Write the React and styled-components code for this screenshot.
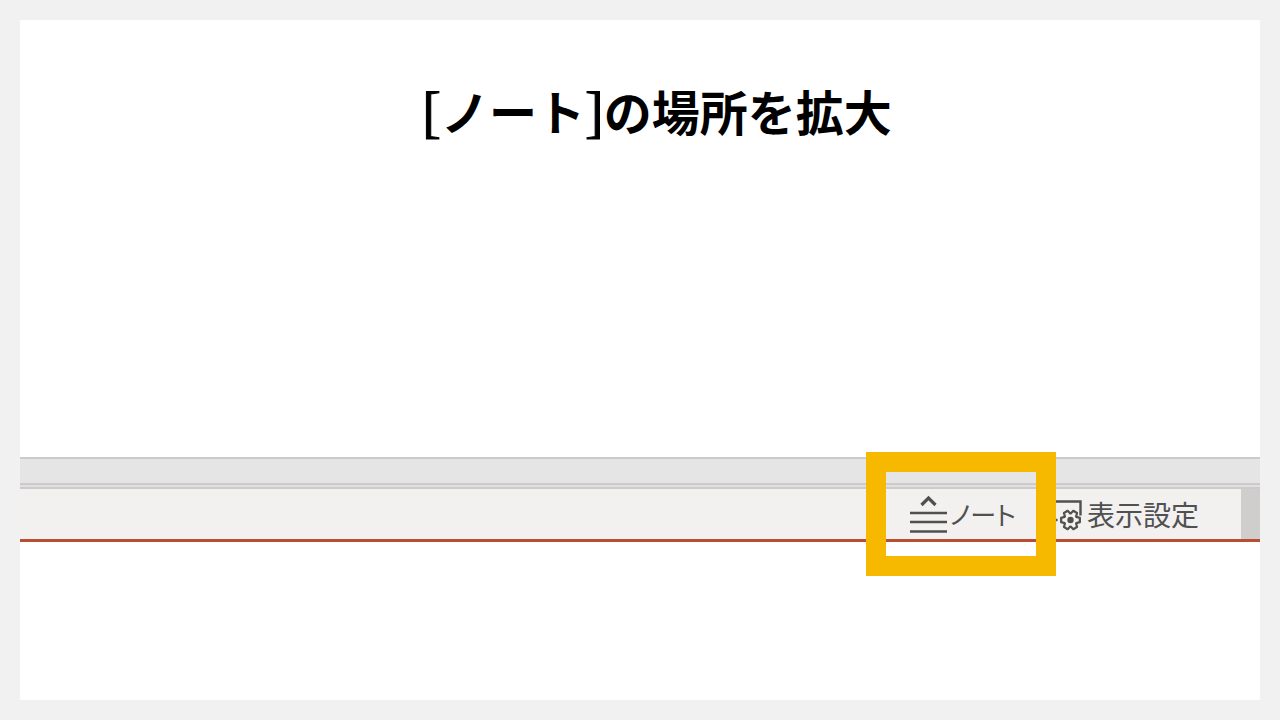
import styled, { createGlobalStyle } from 'styled-components';

const ink = '#505050';
const edge = '#cccacb';
const highlight = '#f6b900';

const GlobalStyle = createGlobalStyle`
    * {
        box-sizing: border-box;
    }
    body {
        margin: 0;
        background: #f1f1f1;
        font-family: 'Noto Sans CJK JP', 'Noto Sans', sans-serif;
    }
`;

const Page = styled.div`
    min-height: 100vh;
    padding: 20px;
    display: flex;
`;

const Slide = styled.main`
    flex: 1;
    min-width: 0;
    padding: 56px 0 158px;
    display: flex;
    flex-direction: column;
    justify-content: space-between;
    background: #fff;
`;

const Title = styled.h1`
    margin: 0;
    padding-left: 34px;
    color: #000;
    font-size: 48px;
    font-weight: 700;
    line-height: 68px;
    text-align: center;
`;

const Bracket = styled.span`
    font-family: 'Liberation Serif', serif;
    font-size: 56px;
    font-weight: 400;
    line-height: 1;
    -webkit-text-stroke: 1px #000;
`;

const BarShell = styled.section`
    background: #e1e0e1;
`;

const Splitter = styled.div`
    height: 28px;
    border-top: 2px solid ${edge};
    border-bottom: 2px solid ${edge};
    background: #e5e5e5;
`;

const StatusBar = styled.footer`
    height: 55px;
    margin-top: 2px;
    display: flex;
    justify-content: flex-end;
    border-top: 2px solid ${edge};
    border-bottom: 3px solid #b94e30;
    background: #f2f1f0;
`;

const BarButton = styled.button`
    position: relative;
    display: flex;
    align-items: center;
    gap: ${props => props.$gap}px;
    margin-right: ${props => props.$after}px;
    padding: 0;
    border: 0;
    background: none;
    color: ${ink};
    font-family: inherit;
    font-size: ${props => props.$tight ? 26 : 28}px;
    line-height: 50px;
    font-feature-settings: ${props => props.$tight ? "'palt'" : 'normal'};
    white-space: nowrap;
    cursor: pointer;
`;

// Frame laid over the button it draws attention to
const Highlight = styled.span`
    position: absolute;
    z-index: 1;
    top: -37px;
    left: -44px;
    width: 190px;
    height: 124px;
    border: 20px solid ${highlight};
    pointer-events: none;
`;

const BarEnd = styled.div`
    width: 19px;
    background: #cfcecd;
`;

const NotesIcon = () => (
    <svg width='38' height='40' viewBox='0 0 38 40' fill='none' stroke={ink} strokeWidth='2.4' aria-hidden='true'>
        <path d='M11.5 11 18.5 4 25.5 11' strokeWidth='3.2' />
        <path d='M0 19H37M0 28H37M0 37.5H37' />
    </svg>
);

// Six teeth, each with two outer and two inner corners
const gearPoints = [0, 60, 120, 180, 240, 300].flatMap(angle => (
    [[-28, 6.6], [-13, 9.6], [13, 9.6], [28, 6.6]].map(([turn, radius]) => {
        const rad = (angle + turn) * Math.PI / 180;
        return `${25.5 + radius * Math.cos(rad)},${26 + radius * Math.sin(rad)}`;
    })
)).join(' ');

const DisplayIcon = () => (
    <svg width='38' height='40' viewBox='0 0 38 40' fill='none' stroke={ink} strokeWidth='2.4' aria-hidden='true'>
        <path d='M2 26V7.5H35.5V21.5M2 26H12.5' />
        <polygon points={gearPoints} strokeWidth='2.2' strokeLinejoin='round' />
        <circle cx='25.5' cy='26' r='3.2' fill={ink} stroke='none' />
    </svg>
);

const App = () => {
    return (
        <Page>
            <GlobalStyle />
            <Slide>
                <Title>
                    <Bracket>[</Bracket>ノート<Bracket>]</Bracket>の場所を拡大
                </Title>
                <BarShell>
                    <Splitter />
                    <StatusBar>
                        <BarButton type='button' $gap={2} $after={29} $tight>
                            <NotesIcon />
                            ノート
                            <Highlight />
                        </BarButton>
                        <BarButton type='button' $gap={4} $after={42}>
                            <DisplayIcon />
                            表示設定
                        </BarButton>
                        <BarEnd />
                    </StatusBar>
                </BarShell>
            </Slide>
        </Page>
    );
};

export default App;
